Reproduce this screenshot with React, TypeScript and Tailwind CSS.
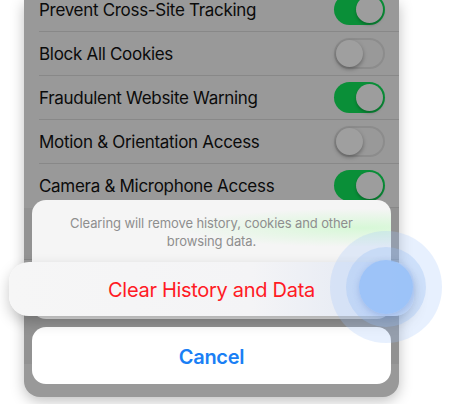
import React from 'react';

interface Setting {
  label: string;
  on: boolean;
}

const settings: Setting[] = [
  { label: 'Prevent Cross-Site Tracking', on: true },
  { label: 'Block All Cookies', on: false },
  { label: 'Fraudulent Website Warning', on: true },
  { label: 'Motion & Orientation Access', on: false },
  { label: 'Camera & Microphone Access', on: true },
];

const Toggle: React.FC<{ on: boolean }> = ({ on }) =>
  on ? (
    <div className="w-[51px] h-[31px] rounded-full bg-[#0a8f38] relative shrink-0">
      <div className="absolute right-[2px] top-[2px] w-[27px] h-[27px] rounded-full bg-[#9d9d9d] shadow-[0_2px_3px_rgba(0,0,0,0.25)]" />
    </div>
  ) : (
    <div className="w-[51px] h-[31px] rounded-full border-[2px] border-[#8c8c8c] bg-[#999999] relative shrink-0">
      <div className="absolute left-0 top-0 w-[27px] h-[27px] rounded-full bg-[#9f9f9f] shadow-[0_2px_4px_rgba(0,0,0,0.35)]" />
    </div>
  );

const Row: React.FC<Setting> = ({ label, on }) => (
  <div className="h-[44px] pl-[15px] flex">
    <div className="flex-1 flex items-center justify-between pr-[14px] border-b border-[#888888]">
      <span className="mt-[3px] text-[17px] text-[#0b0b0b] tracking-[-0.3px]">{label}</span>
      <Toggle on={on} />
    </div>
  </div>
);

export default function App() {
  return (
    <div
      className="relative w-[452px] h-[404px] bg-white overflow-hidden"
      style={{ fontFamily: 'Inter, "Liberation Sans", sans-serif' }}
    >
      <div className="relative ml-[24px] w-[375px] h-[397px] bg-[#999999] rounded-b-[16px] overflow-hidden shadow-[0_4px_14px_rgba(0,0,0,0.25)]">
        <div className="-mt-[12px]">
          {settings.map((s) => (
            <Row key={s.label} {...s} />
          ))}
          <div className="h-[52px] bg-[#929292] border-b border-[#858585]" />
          <div className="h-[44px] pl-[15px]">
            <div className="h-full border-b border-[#888888]" />
          </div>
          <div className="h-[60px] bg-[#929292]" />
        </div>

        {/* action sheet */}
        <div className="absolute left-[8px] right-[8px] bottom-[13px] flex flex-col gap-[8px]">
          <div className="rounded-[14px] overflow-hidden">
            <div className="h-[62px] bg-[#f5f5f5] bg-[radial-gradient(ellipse_at_92%_45%,rgba(215,248,215,1),rgba(245,245,245,0)_40%)] flex flex-col items-center justify-center text-[13px] leading-[18px] text-[#8e8e8e] text-center tracking-[-0.1px]">
              <span className="mt-[2px]">Clearing will remove history, cookies and other</span>
              <span>browsing data.</span>
            </div>
            <div className="h-[57px] bg-[#dedede]" />
          </div>
          <div className="h-[57px] rounded-[14px] bg-white flex items-center justify-center">
            <span className="mt-[2px] text-[20px] font-semibold text-[#1a7ff5] tracking-[-0.3px]">Cancel</span>
          </div>
        </div>
      </div>

      {/* lifted button */}
      <div className="absolute left-[9px] top-[262px] w-[405px] h-[54px] rounded-[20px] bg-[linear-gradient(90deg,#f6f6f6_0%,#f4f4f6_60%,#dfe6f3_100%)] shadow-[0_6px_14px_rgba(0,0,0,0.22)] flex items-center justify-center">
        <span className="mt-[2px] text-[20px] text-[#ff1a24] tracking-[-0.3px]">Clear History and Data</span>
      </div>

      {/* touch indicator */}
      <div className="absolute left-[330px] top-[231px] w-[112px] h-[112px] rounded-full bg-[rgba(160,196,250,0.25)]" />
      <div className="absolute left-[346px] top-[247px] w-[80px] h-[80px] rounded-full bg-[rgba(150,188,245,0.3)]" />
      <div className="absolute left-[359px] top-[260px] w-[54px] h-[54px] rounded-full bg-[rgba(150,192,248,0.85)] shadow-[0_2px_6px_rgba(80,120,200,0.3)]" />
    </div>
  );
}
